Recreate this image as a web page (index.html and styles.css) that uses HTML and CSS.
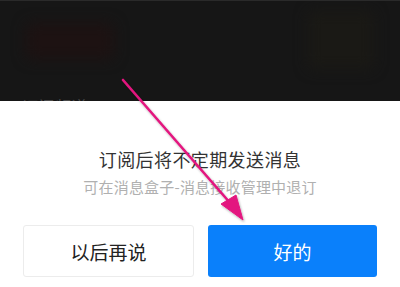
FILE: index.html
```html
<!DOCTYPE html>
<html lang="zh">
<head>
<meta charset="utf-8">
<link rel="stylesheet" href="styles.css">
</head>
<body>
<div class="screen">
  <div class="backdrop">
    <div class="blobs">
      <div class="blob blob-red"></div>
      <div class="blob blob-brown"></div>
    </div>
    <div class="under-title">订阅频道</div>
  </div>
  <div class="sheet">
    <div class="title">订阅后将不定期发送消息</div>
    <div class="subtitle">可在消息盒子-消息接收管理中退订</div>
    <div class="actions">
      <button class="btn btn-later">以后再说</button>
      <button class="btn btn-ok">好的</button>
    </div>
  </div>
  <svg class="arrow" width="400" height="287" viewBox="0 0 400 287">
    <defs>
      <filter id="sh" x="-20%" y="-20%" width="140%" height="140%">
        <feDropShadow dx="1" dy="1.5" stdDeviation="1.2" flood-color="#000" flood-opacity="0.3"/>
      </filter>
    </defs>
    <g filter="url(#sh)" fill="#e3157f" stroke="#e3157f">
      <line x1="123" y1="80" x2="231" y2="204" stroke-width="2.6" stroke-linecap="round"/>
      <polygon points="243,220 221,204 236,195" stroke-width="1" stroke-linejoin="round"/>
    </g>
  </svg>
</div>
</body>
</html>
```
FILE: styles.css
```css
html, body {
  margin: 0;
  padding: 0;
}
body {
  width: 400px;
  height: 287px;
  overflow: hidden;
  background: #ffffff;
  font-family: "Noto Sans CJK SC", "Noto Sans", sans-serif;
}
.screen {
  position: relative;
  width: 400px;
  height: 287px;
  display: flex;
  flex-direction: column;
}
.backdrop {
  height: 101px;
  flex-shrink: 0;
  box-sizing: border-box;
  background: #161616;
  border-top: 1px solid #2a2a2a;
  display: flex;
  flex-direction: column;
  overflow: hidden;
  padding: 0 22px;
}
.blobs {
  display: flex;
  justify-content: space-between;
  align-items: flex-start;
  padding: 10px 0 0 4px;
  height: 68px;
  flex-shrink: 0;
}
.blob {
  filter: blur(7px);
}
.blob-red {
  width: 88px;
  height: 36px;
  margin-top: 12px;
  background: #1d1212;
  border-radius: 6px;
}
.blob-brown {
  width: 66px;
  height: 58px;
  margin-right: 4px;
  background: #1a1915;
  border-radius: 6px;
}
.under-title {
  margin-top: 16px;
  font-size: 16px;
  line-height: 22px;
  color: #4a4a4a;
  letter-spacing: 0.5px;
  flex-shrink: 0;
}
.sheet {
  flex: 1;
  background: #ffffff;
  display: flex;
  flex-direction: column;
  align-items: center;
  padding-top: 46px;
}
.title {
  font-size: 18px;
  line-height: 24px;
  color: #333333;
  letter-spacing: 0.4px;
}
.subtitle {
  margin-top: 5px;
  font-size: 15px;
  line-height: 22px;
  color: #b0b0b0;
  letter-spacing: 0.2px;
}
.actions {
  margin-top: 27px;
  width: 354px;
  display: grid;
  grid-template-columns: 171px 169px;
  column-gap: 14px;
}
.btn {
  height: 52px;
  border-radius: 3px;
  font-family: "Noto Sans CJK SC", "Noto Sans", sans-serif;
  font-size: 19px;
  padding: 0;
  cursor: pointer;
}
.btn-later {
  background: #ffffff;
  border: 1px solid #ececec;
  color: #222222;
}
.btn-ok {
  background: #0a80fb;
  border: none;
  color: #ffffff;
}
.arrow {
  position: absolute;
  left: 0;
  top: 0;
  pointer-events: none;
}
```
